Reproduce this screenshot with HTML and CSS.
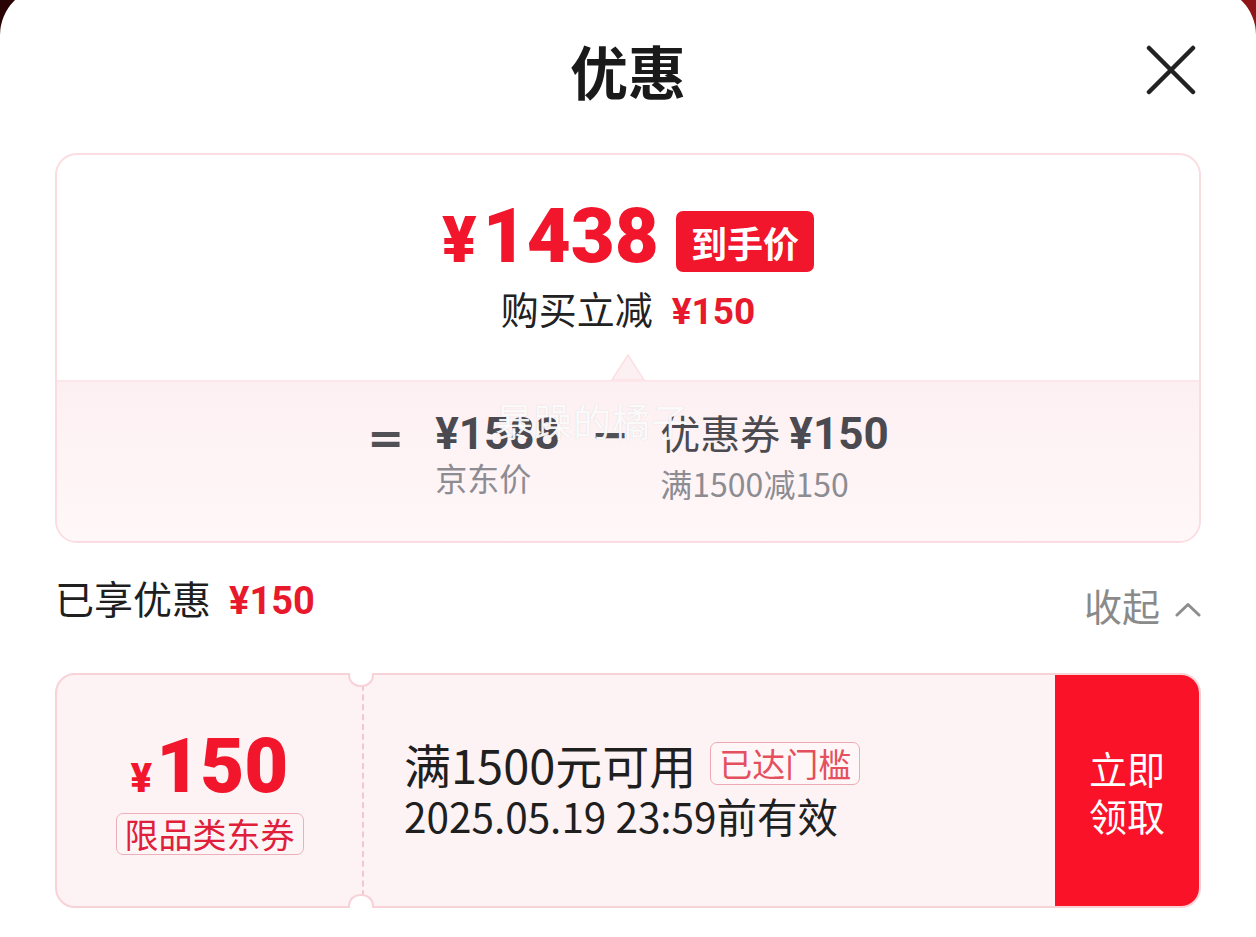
FILE: index.html
```html
<!DOCTYPE html>
<html lang="zh-CN">
<head>
<meta charset="utf-8">
<title>优惠</title>
<link rel="stylesheet" href="styles.css">
</head>
<body>
<div class="sheet">
  <header class="header">
    <span class="header-side"></span>
    <h1 class="title">优惠</h1>
    <button class="close" aria-label="关闭">
      <svg width="50" height="50" viewBox="0 0 50 50"><path d="M3 3 L47 47 M47 3 L3 47" stroke="#222" stroke-width="4.5" stroke-linecap="round" fill="none"/></svg>
    </button>
  </header>

  <section class="summary">
    <div class="summary-top">
      <div class="final-row">
        <div class="final-price"><span class="yen">¥</span>1438</div>
        <span class="final-tag">到手价</span>
      </div>
      <div class="instant"><span>购买立减</span><span class="instant-amt">¥150</span></div>
      <svg class="tri" width="34" height="26" viewBox="0 0 34 26"><polygon points="1,26 17,1 33,26" fill="#fdf0f2" stroke="#fbdfe3" stroke-width="1.5"/></svg>
    </div>
    <div class="summary-bottom">
      <span class="op op-eq">=</span>
      <div class="term">
        <div class="term-main"><span class="num">¥1588</span></div>
        <div class="term-sub">京东价</div>
      </div>
      <span class="op op-minus">−</span>
      <div class="term">
        <div class="term-main">优惠券 <span class="num">¥150</span></div>
        <div class="term-sub term-sub-2">满1500减150</div>
      </div>
    </div>
    <div class="watermark">暴躁的橘子</div>
  </section>

  <div class="enjoyed">
    <div class="enjoyed-left"><span>已享优惠</span><span class="enjoyed-amt">¥150</span></div>
    <div class="collapse"><span>收起</span>
      <svg width="26" height="15" viewBox="0 0 26 15"><path d="M2 13 L13 2.5 L24 13" stroke="#8e8e8e" stroke-width="3" fill="none" stroke-linecap="round" stroke-linejoin="round"/></svg>
    </div>
  </div>

  <div class="coupon">
    <div class="stub">
      <div class="stub-amt"><span class="stub-yen">¥</span>150</div>
      <span class="stub-tag">限品类东券</span>
    </div>
    <div class="coupon-body">
      <div class="cond"><span>满1500元可用</span><span class="reached">已达门槛</span></div>
      <div class="expire">2025.05.19 23:59前有效</div>
    </div>
    <button class="claim">立即<br>领取</button>
  </div>
</div>
</body>
</html>
```

FILE: styles.css
```css
* { box-sizing: border-box; margin: 0; padding: 0; }

html, body { height: 100%; }

body {
  background: linear-gradient(90deg, #2a0304 0%, #5a0a0c 50%, #8e1618 100%);
  font-family: "Noto Sans CJK SC", "Noto Sans", sans-serif;
  color: #1f1f1f;
  overflow: hidden;
}

.sheet {
  margin-top: -13px;
  background: #fff;
  border-radius: 48px 48px 0 0;
  min-height: 960px;
  padding: 0 55px;
}

/* header */
.header {
  height: 153px;
  padding-top: 13px;
  display: grid;
  grid-template-columns: 1fr auto 1fr;
  align-items: center;
}
.title {
  font-size: 58px;
  font-weight: 700;
  line-height: 1;
  color: #1a1a1a;
}
.close {
  justify-self: end;
  margin-right: 5px;
  width: 50px;
  height: 50px;
  border: 0;
  background: none;
  display: block;
}
.close svg { display: block; }

/* summary card */
.summary {
  margin-top: 13px;
  height: 390px;
  border: 2px solid #fbdde1;
  border-radius: 22px;
  overflow: hidden;
  position: relative;
  display: flex;
  flex-direction: column;
}
.summary-top {
  height: 227px;
  flex: none;
  padding-top: 43px;
  display: flex;
  flex-direction: column;
  align-items: center;
  border-bottom: 2px solid #fce6e9;
}
.final-row {
  display: flex;
  align-items: center;
  gap: 17px;
  height: 80px;
}
.final-price {
  font-family: "Roboto", "Liberation Sans", sans-serif;
  font-weight: 900;
  font-size: 76px;
  line-height: 80px;
  color: #f2162c;
}
.yen {
  font-size: 64px;
  margin-right: 6px;
}
.final-tag {
  margin-top: 7px;
  height: 61px;
  padding: 0 15px;
  background: #f2162c;
  color: #fff;
  border-radius: 7px;
  font-size: 36px;
  font-weight: 700;
  display: flex;
  align-items: center;
}
.instant {
  margin-top: 8px;
  display: flex;
  align-items: baseline;
  gap: 19px;
  font-size: 38px;
  line-height: 44px;
  color: #222;
}
.instant-amt {
  font-family: "Roboto", "Liberation Sans", sans-serif;
  font-weight: 700;
  font-size: 37px;
  color: #e8192c;
}
.tri {
  margin-top: auto;
  display: block;
}

.summary-bottom {
  flex: 1;
  display: flex;
  justify-content: center;
  align-items: flex-start;
  gap: 31px;
  padding-top: 27px;
  background: linear-gradient(180deg, #fdf0f2 0%, #fff7f8 100%);
  color: #4a4a50;
}
.op {
  font-family: "DejaVu Sans", sans-serif;
  font-weight: 700;
  line-height: 46px;
  color: #505055;
}
.op-eq { font-size: 44px; margin-top: 6px; }
.op-minus { font-size: 46px; margin-top: 2px; }
.term-main {
  font-size: 40px;
  line-height: 46px;
  font-weight: 400;
  white-space: nowrap;
}
.num {
  font-family: "Roboto", "Liberation Sans", sans-serif;
  font-weight: 700;
  font-size: 44px;
}
.term-sub {
  font-size: 32px;
  line-height: 40px;
  color: #8c8c92;
}
.term-sub-2 { margin-top: 6px; }

.watermark {
  position: absolute;
  left: 438px;
  top: 246px;
  font-size: 38px;
  line-height: 38px;
  letter-spacing: 1px;
  color: rgba(255, 255, 255, 0.92);
  text-shadow: 0 0 1px rgba(150, 150, 150, 0.4);
  pointer-events: none;
}

/* enjoyed row */
.enjoyed {
  margin-top: 29px;
  display: flex;
  justify-content: space-between;
  align-items: flex-start;
}
.enjoyed-left {
  display: flex;
  align-items: baseline;
  gap: 18px;
  font-size: 39px;
  line-height: 50px;
  color: #1f1f1f;
}
.enjoyed-amt {
  font-family: "Roboto", "Liberation Sans", sans-serif;
  font-weight: 700;
  font-size: 38px;
  color: #e8192c;
}
.collapse {
  margin-top: 8px;
  display: flex;
  align-items: center;
  gap: 15px;
  font-size: 38px;
  line-height: 50px;
  color: #8a8a8a;
}
.collapse svg { display: block; margin-top: 8px; }

/* coupon */
.coupon {
  margin-top: 43px;
  height: 235px;
  display: flex;
  border: 2px solid #f7d3d8;
  border-radius: 20px;
  background: #fdf2f4;
}
.stub {
  width: 307px;
  flex: none;
  position: relative;
  border-right: 2px dashed #f2c8ce;
  display: flex;
  flex-direction: column;
  align-items: center;
  justify-content: center;
}
.stub::before,
.stub::after {
  content: "";
  position: absolute;
  right: -12px;
  width: 22px;
  height: 12px;
  background: #fff;
  border: 2px solid #f7d3d8;
}
.stub::before {
  top: -2px;
  border-top: 0;
  border-radius: 0 0 12px 12px;
}
.stub::after {
  bottom: -2px;
  border-bottom: 0;
  border-radius: 12px 12px 0 0;
}
.stub-amt {
  font-family: "Roboto", "Liberation Sans", sans-serif;
  font-weight: 900;
  font-size: 76px;
  line-height: 80px;
  color: #f2162c;
}
.stub-yen {
  font-size: 40px;
  margin-right: 4px;
}
.stub-tag {
  margin-top: -6px;
  height: 42px;
  padding: 0 8px;
  border: 1.5px solid #eeb0b8;
  border-radius: 7px;
  color: #e0203a;
  font-size: 34px;
  line-height: 39px;
  background: #fdf4f6;
}

.coupon-body {
  flex: 1;
  padding-left: 40px;
  display: flex;
  flex-direction: column;
  justify-content: center;
  color: #1f1f1f;
}
.cond {
  display: flex;
  align-items: center;
  gap: 14px;
  font-size: 47px;
  line-height: 50px;
}
.reached {
  height: 43px;
  padding: 0 8px;
  border: 1.5px solid #eeaab2;
  border-radius: 7px;
  color: #e4505e;
  font-size: 33px;
  line-height: 40px;
  background: #fff6f7;
}
.expire {
  font-size: 40.5px;
  line-height: 54px;
}

.claim {
  width: 144px;
  flex: none;
  border: 0;
  border-radius: 0 18px 18px 0;
  background: #fa1228;
  color: #fff;
  font-family: "Noto Sans CJK SC", sans-serif;
  font-size: 38px;
  line-height: 47px;
  text-align: center;
}
```
